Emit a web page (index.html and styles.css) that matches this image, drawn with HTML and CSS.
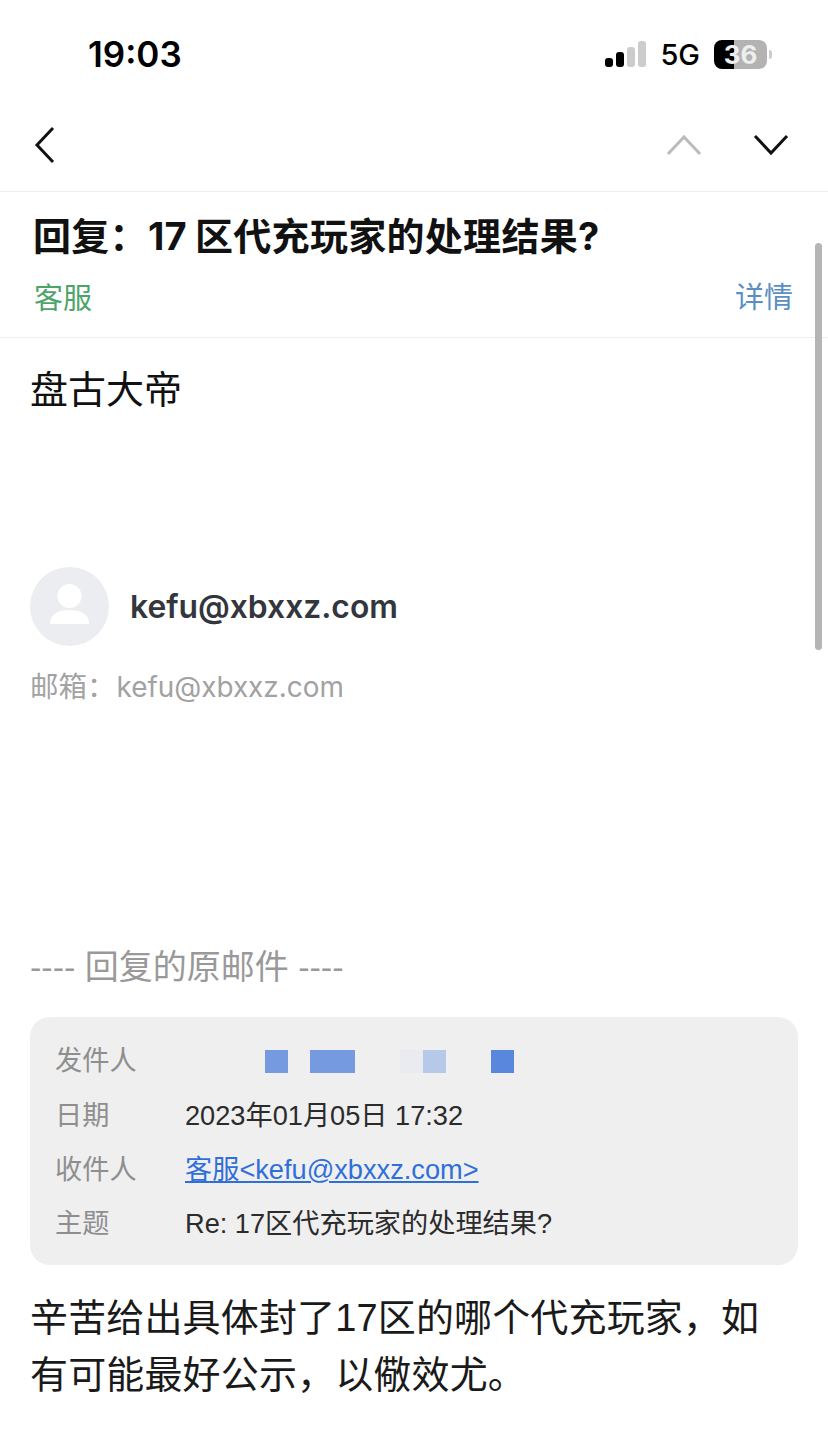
FILE: index.html
```html
<!DOCTYPE html>
<html lang="zh-CN">
<head>
  <meta charset="UTF-8" />
  <meta name="viewport" content="width=device-width, initial-scale=1.0" />
  <title>回复：17区代充玩家的处理结果?</title>
  <link rel="stylesheet" href="styles.css">
</head>
<body>
  <div class="status-bar">
    <span class="clock">19:03</span>
    <div class="status-icons">
      <svg class="signal" width="42" height="26" viewBox="0 0 42 26">
        <rect x="0" y="17" width="8" height="9" rx="3" fill="#000" />
        <rect x="11" y="11" width="8" height="15" rx="3" fill="#000" />
        <rect x="22" y="6" width="8" height="20" rx="3" fill="#ccc" />
        <rect x="33" y="0" width="8" height="26" rx="3" fill="#ccc" />
      </svg>
      <span class="network">5G</span>
      <div class="battery"><span class="battery-level">36</span></div>
      <span class="battery-tip"></span>
    </div>
  </div>

  <nav class="nav-bar">
    <svg class="icon-back" width="24" height="38" viewBox="0 0 24 38">
      <path d="M20 2 L4 19 L20 36" fill="none" stroke="#111" stroke-width="3" />
    </svg>
    <div class="nav-arrows">
      <svg width="36" height="24" viewBox="0 0 36 24">
        <path d="M2 21 L18 4 L34 21" fill="none" stroke="#bbb" stroke-width="3" />
      </svg>
      <svg width="36" height="24" viewBox="0 0 36 24">
        <path d="M2 3 L18 20 L34 3" fill="none" stroke="#111" stroke-width="3" />
      </svg>
    </div>
  </nav>

  <header class="mail-header">
    <h1 class="mail-subject">回复：17<span class="thin-gap">区</span>代充玩家的处理结果?</h1>
    <div class="mail-meta">
      <span class="sender">客服</span>
      <span class="details">详情</span>
    </div>
  </header>

  <main class="mail-body">
    <p class="greeting">盘古大帝</p>

    <div class="signature">
      <div class="avatar">
        <svg width="79" height="79" viewBox="0 0 79 79">
          <circle cx="39.5" cy="29" r="12" fill="#fff" />
          <path d="M20 57 C20 47 28 43 39.5 43 C51 43 59 47 59 57 Z" fill="#fff" />
        </svg>
      </div>
      <span class="signature-name">kefu@xbxxz.com</span>
    </div>
    <p class="signature-mail">邮箱：<span class="signature-addr">kefu@xbxxz.com</span></p>

    <p class="quote-title">---- 回复的原邮件 ----</p>

    <div class="quote-card">
      <div class="quote-row">
        <span class="quote-label">发件人</span>
        <div class="masked">
          <i class="mask mask-1"></i>
          <i class="mask mask-2"></i>
          <i class="mask mask-3"></i>
          <i class="mask mask-4"></i>
          <i class="mask mask-5"></i>
        </div>
      </div>
      <div class="quote-row">
        <span class="quote-label">日期</span>
        <span class="quote-value">2023年01月05日 17:32</span>
      </div>
      <div class="quote-row">
        <span class="quote-label">收件人</span>
        <a class="quote-link" href="#">客服&lt;kefu@xbxxz.com&gt;</a>
      </div>
      <div class="quote-row">
        <span class="quote-label">主题</span>
        <span class="quote-value">Re: 17区代充玩家的处理结果?</span>
      </div>
    </div>

    <p class="reply-text">辛苦给出具体封了17区的哪个代充玩家，如有可能最好公示，以儆效尤。</p>
  </main>

  <div class="scrollbar"></div>
</body>
</html>
```

FILE: styles.css
```css
* { box-sizing: border-box; }
html, body { height: 100%; }
body {
  margin: 0;
  background: #fff;
  color: #111;
  font-family: Inter, "Noto Sans CJK SC", sans-serif;
  overflow: hidden;
  position: relative;
}
p, h1 { margin: 0; }

.status-bar {
  height: 108px;
  padding: 32px 56px 0 88px;
  display: flex;
  justify-content: space-between;
  align-items: flex-start;
}
.clock {
  font-size: 35px;
  line-height: 44px;
  font-weight: 600;
  color: #000;
}
.status-icons {
  display: flex;
  align-items: center;
  height: 44px;
}
.network {
  margin-left: 13px;
  font-size: 29px;
  font-weight: 500;
  color: #000;
}
.battery {
  margin-left: 14px;
  width: 53px;
  height: 29px;
  border-radius: 8px;
  overflow: hidden;
  background: linear-gradient(to right, #000 0, #000 20px, #b3b3b3 20px);
  text-align: center;
}
.battery-level {
  font-size: 26px;
  line-height: 29px;
  font-weight: 700;
  color: #eee;
  display: block;
}
.battery-tip {
  margin-left: 2px;
  width: 3px;
  height: 9px;
  border-radius: 0 3px 3px 0;
  background: #ccc;
}

.nav-bar {
  height: 84px;
  padding: 0 39px 10px 33px;
  display: flex;
  justify-content: space-between;
  align-items: center;
  border-bottom: 1px solid #eee;
}
.nav-arrows {
  display: flex;
  gap: 51px;
}

.mail-header {
  height: 146px;
  padding: 21px 35px 0 33px;
  border-bottom: 1px solid #eee;
}
.mail-subject {
  font-size: 38px;
  line-height: 46px;
  font-weight: 700;
  letter-spacing: 0.3px;
}
.thin-gap { margin-left: 8px; }
.mail-meta {
  margin-top: 20px;
  display: flex;
  justify-content: space-between;
  font-size: 29px;
  line-height: 40px;
}
.sender { color: #4da468; margin-left: 1px; }
.details { color: #5a8fc4; margin-top: -1px; }

.mail-body { padding: 0 30px; }
.greeting {
  margin-top: 27px;
  font-size: 38px;
  line-height: 48px;
}
.signature {
  margin-top: 154px;
  display: flex;
  align-items: center;
  gap: 21px;
}
.avatar {
  width: 79px;
  height: 79px;
  border-radius: 50%;
  background: #ebedf0;
}
.avatar svg { display: block; }
.signature-name {
  font-size: 31.8px;
  font-weight: 600;
  color: #33363d;
}
.signature-mail {
  margin-top: 21px;
  font-size: 28.5px;
  line-height: 40px;
  color: #a2a2a2;
}
.signature-addr {
  margin-left: 1px;
  font-size: 27.9px;
}
.quote-title {
  margin-top: 240px;
  font-family: "Liberation Sans", "Noto Sans CJK SC", sans-serif;
  font-size: 34px;
  line-height: 40px;
  color: #999;
}
.quote-card {
  margin-top: 30px;
  height: 248px;
  padding: 14px 25px 0;
  border-radius: 20px;
  background: #efeff0;
  font-family: "Liberation Sans", "Noto Sans CJK SC", sans-serif;
}
.quote-row {
  height: 54.4px;
  display: flex;
  align-items: center;
  font-size: 27.2px;
}
.quote-label {
  width: 130px;
  color: #8e8e8e;
}
.quote-value { color: #2b2b2b; }
.quote-link {
  color: #2f6fd8;
  text-decoration: underline;
}
.masked {
  display: flex;
  height: 23px;
  margin: 7px 0 0 80px;
}
.mask { display: block; width: 23px; height: 23px; }
.mask-1 { background: #769ae0; }
.mask-2 { background: #769ae0; width: 45px; margin-left: 22px; }
.mask-3 { background: #e9ebf1; margin-left: 45px; }
.mask-4 { background: #b6c9e9; }
.mask-5 { background: #5a87de; margin-left: 45px; }
.reply-text {
  margin-top: 25px;
  padding-right: 20px;
  font-family: "Liberation Sans", "Noto Sans CJK SC", sans-serif;
  font-size: 38px;
  line-height: 57px;
  letter-spacing: 0.15px;
  color: #1a1a1a;
}

.scrollbar {
  position: absolute;
  top: 243px;
  right: 6px;
  width: 7px;
  height: 407px;
  border-radius: 4px;
  background: #b5b5b5;
}
```
